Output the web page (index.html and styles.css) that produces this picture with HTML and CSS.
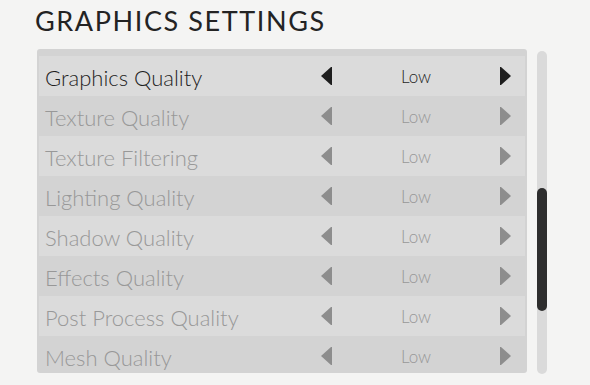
FILE: index.html
```html
<!DOCTYPE html>
<html lang="en">
<head>
  <meta charset="UTF-8">
  <meta name="viewport" content="width=device-width, initial-scale=1.0">
  <title>Graphics Settings</title>
  <link rel="stylesheet" href="styles.css">
</head>
<body>
  <div id="settings">
    <h1 class="title">GRAPHICS SETTINGS</h1>

    <div class="body">
      <div class="panel">
        <div class="row active">
          <span class="label">Graphics Quality</span>
          <div class="control">
            <svg class="arrow" viewBox="0 0 11 18"><polygon points="0,9 10,0 11,0 11,18 10,18"/></svg>
            <span class="value">Low</span>
            <svg class="arrow" viewBox="0 0 11 18"><polygon points="11,9 1,0 0,0 0,18 1,18"/></svg>
          </div>
        </div>
        <div class="row">
          <span class="label">Texture Quality</span>
          <div class="control">
            <svg class="arrow" viewBox="0 0 11 18"><polygon points="0,9 10,0 11,0 11,18 10,18"/></svg>
            <span class="value">Low</span>
            <svg class="arrow" viewBox="0 0 11 18"><polygon points="11,9 1,0 0,0 0,18 1,18"/></svg>
          </div>
        </div>
        <div class="row">
          <span class="label">Texture Filtering</span>
          <div class="control">
            <svg class="arrow" viewBox="0 0 11 18"><polygon points="0,9 10,0 11,0 11,18 10,18"/></svg>
            <span class="value">Low</span>
            <svg class="arrow" viewBox="0 0 11 18"><polygon points="11,9 1,0 0,0 0,18 1,18"/></svg>
          </div>
        </div>
        <div class="row">
          <span class="label">Lighting Quality</span>
          <div class="control">
            <svg class="arrow" viewBox="0 0 11 18"><polygon points="0,9 10,0 11,0 11,18 10,18"/></svg>
            <span class="value">Low</span>
            <svg class="arrow" viewBox="0 0 11 18"><polygon points="11,9 1,0 0,0 0,18 1,18"/></svg>
          </div>
        </div>
        <div class="row">
          <span class="label">Shadow Quality</span>
          <div class="control">
            <svg class="arrow" viewBox="0 0 11 18"><polygon points="0,9 10,0 11,0 11,18 10,18"/></svg>
            <span class="value">Low</span>
            <svg class="arrow" viewBox="0 0 11 18"><polygon points="11,9 1,0 0,0 0,18 1,18"/></svg>
          </div>
        </div>
        <div class="row">
          <span class="label">Effects Quality</span>
          <div class="control">
            <svg class="arrow" viewBox="0 0 11 18"><polygon points="0,9 10,0 11,0 11,18 10,18"/></svg>
            <span class="value">Low</span>
            <svg class="arrow" viewBox="0 0 11 18"><polygon points="11,9 1,0 0,0 0,18 1,18"/></svg>
          </div>
        </div>
        <div class="row">
          <span class="label">Post Process Quality</span>
          <div class="control">
            <svg class="arrow" viewBox="0 0 11 18"><polygon points="0,9 10,0 11,0 11,18 10,18"/></svg>
            <span class="value">Low</span>
            <svg class="arrow" viewBox="0 0 11 18"><polygon points="11,9 1,0 0,0 0,18 1,18"/></svg>
          </div>
        </div>
        <div class="row">
          <span class="label">Mesh Quality</span>
          <div class="control">
            <svg class="arrow" viewBox="0 0 11 18"><polygon points="0,9 10,0 11,0 11,18 10,18"/></svg>
            <span class="value">Low</span>
            <svg class="arrow" viewBox="0 0 11 18"><polygon points="11,9 1,0 0,0 0,18 1,18"/></svg>
          </div>
        </div>
      </div>

      <div class="scrollbar">
        <div class="thumb"></div>
      </div>
    </div>
  </div>
</body>
</html>
```

FILE: styles.css
```css
body {
  font-family: Lato, "Open Sans", sans-serif;
  background-color: #f4f4f3;
  margin: 0;
  padding: 0;
}
#settings {
  padding: 0 0 0 37px;
}
.title {
  margin: 0 0 0 -2px;
  height: 49px;
  line-height: 42px;
  font-size: 27px;
  font-weight: 400;
  letter-spacing: 1.6px;
  color: #232323;
}
.body {
  display: flex;
  align-items: flex-start;
}
.panel {
  width: 486px;
  height: 317px;
  padding: 7px 2px 0 2px;
  background-color: #d3d3d3;
  border-radius: 3px;
  overflow: hidden;
}
.row {
  display: flex;
  align-items: center;
  height: 40px;
}
.row:nth-child(odd) {
  background-color: #dbdbdb;
}
.label {
  flex: 1;
  padding: 2px 0 0 6px;
  font-size: 22px;
  font-weight: 300;
  color: #989898;
}
.control {
  display: flex;
  align-items: center;
  justify-content: space-between;
  width: 190px;
  margin-right: 14px;
}
.arrow {
  width: 11px;
  height: 18px;
  fill: #8d8d8d;
}
.value {
  font-size: 17px;
  font-weight: 300;
  color: #989898;
}
.row.active .label,
.row.active .value {
  color: #1f1f1f;
}
.row.active .arrow {
  fill: #1e1e1e;
}
.scrollbar {
  position: relative;
  width: 10px;
  height: 323px;
  margin: 2px 0 0 10px;
  background-color: #dadada;
  border-radius: 5px;
}
.thumb {
  position: absolute;
  top: 137px;
  left: 0;
  width: 10px;
  height: 123px;
  background-color: #2e2e2e;
  border-radius: 5px;
}
```
